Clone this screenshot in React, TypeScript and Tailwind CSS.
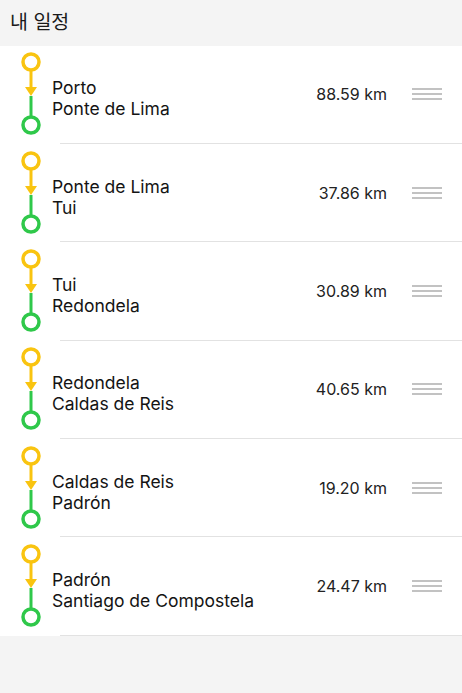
const legs = [
  { from: 'Porto', to: 'Ponte de Lima', km: '88.59 km' },
  { from: 'Ponte de Lima', to: 'Tui', km: '37.86 km' },
  { from: 'Tui', to: 'Redondela', km: '30.89 km' },
  { from: 'Redondela', to: 'Caldas de Reis', km: '40.65 km' },
  { from: 'Caldas de Reis', to: 'Padrón', km: '19.20 km' },
  { from: 'Padrón', to: 'Santiago de Compostela', km: '24.47 km' },
];

const RouteIcon = () => (
  <svg width="22" height="84" viewBox="0 0 22 84" fill="none">
    <line x1="11" y1="18" x2="11" y2="36" stroke="#f9c410" strokeWidth="3" />
    <polygon points="5,35 17,35 11,44" fill="#f9c410" />
    <line x1="11" y1="44" x2="11" y2="66" stroke="#2fc84a" strokeWidth="3" />
    <circle cx="11" cy="10" r="8" stroke="#f9c410" strokeWidth="3.5" fill="white" />
    <circle cx="11" cy="73" r="8" stroke="#2fc84a" strokeWidth="3.5" fill="white" />
  </svg>
);

const DragHandle = () => (
  <div className="flex flex-col gap-[3px] w-[30px]">
    <div className="h-[2px] bg-[#c2c2c2]" />
    <div className="h-[2px] bg-[#c2c2c2]" />
    <div className="h-[2px] bg-[#c2c2c2]" />
  </div>
);

export default function App() {
  return (
    <div
      className="min-h-[693px] w-[462px] bg-[#f4f4f4]"
      style={{ fontFamily: 'Inter, "Noto Sans CJK KR", sans-serif' }}
    >
      <div className="h-[45.5px] flex items-center px-[10px] text-[19.5px] text-[#1a1a1a]">
        내 일정
      </div>
      <div className="bg-white">
        {legs.map((leg) => (
          <div key={leg.from}>
            <div className="h-[97.4px] flex items-center">
              <div className="pl-[20px] pr-[10px] flex items-center">
                <RouteIcon />
              </div>
              <div className="flex-1 pt-[8px] text-[17.5px] leading-[21px] text-[#141414]">
                <div>{leg.from}</div>
                <div>{leg.to}</div>
              </div>
              <div className="text-[16px] text-[#222] mr-[25px]">{leg.km}</div>
              <div className="mr-[20px]">
                <DragHandle />
              </div>
            </div>
            <div className="ml-[60px] h-px bg-[#e2e2e2]" />
          </div>
        ))}
      </div>
    </div>
  );
}
